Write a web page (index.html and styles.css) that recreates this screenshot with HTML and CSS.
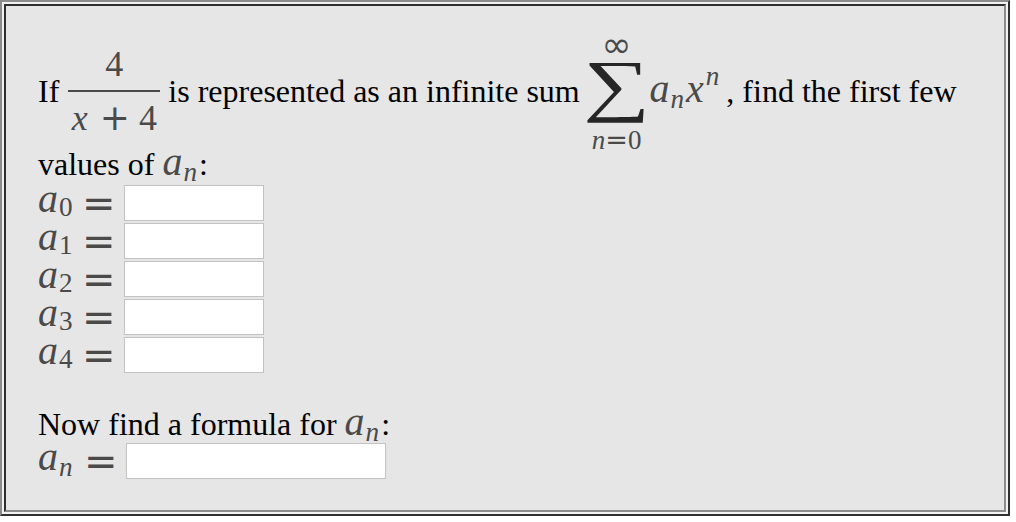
FILE: index.html
```html
<!DOCTYPE html>
<html lang="en">

<head>
    <meta charset="UTF-8">
    <meta name="viewport" content="width=device-width, initial-scale=1.0">
    <title>Power series problem</title>
    <link rel="stylesheet" href="styles.css">
</head>

<body>
    <div class="frame">
        <div class="problem">
            <!-- statement with the fraction and the series -->
            <div class="lead">
                <span class="txt">If</span>
                <span class="frac">
                    <span class="num">4</span>
                    <span class="bar"></span>
                    <span class="den"><i>x</i><span class="op">+</span>4</span>
                </span>
                <span class="txt">is represented as an infinite sum</span>
                <span class="sum">
                    <span class="lim inf">&infin;</span>
                    <span class="sigma">&sum;</span>
                    <span class="lim"><i>n</i><span class="small-eq">=</span>0</span>
                </span>
                <span class="txt"><span class="m series"><i>a</i><sub>n</sub><i>x</i><sup>n</sup></span>, find the first few</span>
            </div>

            <p class="line">values of <span class="m"><i>a</i><sub>n</sub></span>:</p>

            <div class="answers">
                <div class="row"><span class="m lhs"><i>a</i><sub class="up">0</sub></span><span class="eq">=</span><input class="ans" type="text"></div>
                <div class="row"><span class="m lhs"><i>a</i><sub class="up">1</sub></span><span class="eq">=</span><input class="ans" type="text"></div>
                <div class="row"><span class="m lhs"><i>a</i><sub class="up">2</sub></span><span class="eq">=</span><input class="ans" type="text"></div>
                <div class="row"><span class="m lhs"><i>a</i><sub class="up">3</sub></span><span class="eq">=</span><input class="ans" type="text"></div>
                <div class="row"><span class="m lhs"><i>a</i><sub class="up">4</sub></span><span class="eq">=</span><input class="ans" type="text"></div>
            </div>

            <p class="line formula">Now find a formula for <span class="m"><i>a</i><sub>n</sub></span>:</p>

            <div class="row">
                <span class="m lhs last"><i>a</i><sub>n</sub></span><span class="eq">=</span><input class="ans wide" type="text">
            </div>
        </div>
    </div>
</body>

</html>
```

FILE: styles.css
```css
body {
    margin: 0;
    background: #fff;
    font-family: "Liberation Serif", "Times New Roman", serif;
    font-size: 32px;
    color: #000;
}

/* double bevelled frame round the problem */
.frame {
    box-sizing: border-box;
    width: 1010px;
    height: 516px;
    padding: 2px;
    background: #f2f2f2;
    border: 2px solid;
    border-color: #8c8c8c #2f2f2f #2f2f2f #8c8c8c;
}

.problem {
    box-sizing: border-box;
    height: 100%;
    padding: 31px 32px 0;
    background: #e6e6e6;
    border: 2px solid;
    border-color: #2f2f2f #8c8c8c #8c8c8c #2f2f2f;
}

p {
    margin: 0;
}

/* first sentence: items centred on the fraction bar */
.lead {
    display: flex;
    align-items: center;
    height: 108px;
}

.txt {
    line-height: 38px;
    white-space: nowrap;
}

.line {
    line-height: 39px;
}

.formula {
    margin-top: 32px;
    line-height: 36px;
}

/* math */
.m,
.frac,
.sum {
    color: #4a4a4a;
}

.m {
    font-size: 40px;
    line-height: 0;
}

.m i,
.frac i,
.sum i {
    font-family: "Liberation Serif", serif;
    font-style: italic;
}

.m i {
    padding-right: 1px;
}

.m sub,
.m sup {
    font-size: 0.68em;
    font-style: italic;
    line-height: 0;
}

.m sub {
    vertical-align: -0.22em;
    margin-right: 2px;
}

.m sub.up {
    font-style: normal;
    vertical-align: -0.16em;
}

.m sup {
    vertical-align: 0.62em;
    margin-left: 1px;
    margin-right: 2px;
}

.series {
    margin-right: 5px;
}

.frac {
    display: flex;
    flex-direction: column;
    align-items: center;
    width: 92px;
    margin: 0 8px 0 9px;
    font-size: 36px;
    line-height: 38px;
}

.bar {
    align-self: stretch;
    height: 2px;
    margin: 7px 0;
    background: #4a4a4a;
}

.den {
    display: flex;
    align-items: baseline;
}

.op {
    font-family: "DejaVu Sans", sans-serif;
    margin: 0 9px 0 12px;
}

.sum {
    display: flex;
    flex-direction: column;
    align-items: center;
    margin: 0 8px 0 12px;
}

.lim {
    font-size: 27px;
    line-height: 24px;
}

.inf {
    font-family: "DejaVu Sans", sans-serif;
    font-size: 36px;
    margin-top: 3px;
}

.small-eq {
    font-family: "DejaVu Sans", sans-serif;
}

/* big sigma, widened to the proportions of a display operator */
.sigma {
    display: block;
    height: 58px;
    margin: 6px 0 7px;
    font-size: 69px;
    line-height: 44px;
    color: #262626;
    transform: scaleX(1.36);
}

/* answer rows */
.row {
    display: flex;
    align-items: center;
    height: 38px;
}

.lhs {
    width: 44px;
    margin-bottom: 8px;
    line-height: 38px;
}

.lhs.last {
    width: 46px;
}

.eq {
    font-family: "DejaVu Sans", sans-serif;
    font-size: 40px;
    line-height: 38px;
    color: #4a4a4a;
    margin-right: 8px;
}

.ans {
    box-sizing: border-box;
    width: 140px;
    height: 36px;
    margin: 0;
    border: 1px solid #c2c2c2;
    background: #fff;
    font-size: 20px;
}

.wide {
    width: 260px;
}
```
